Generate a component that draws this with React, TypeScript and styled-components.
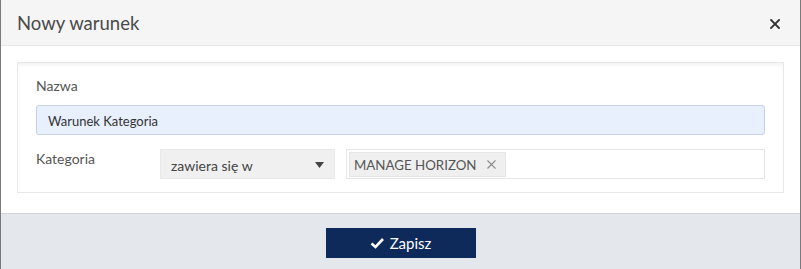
import React from "react";
import styled, { createGlobalStyle } from "styled-components";

const GlobalStyle = createGlobalStyle`
    body {
        margin: 0;
        font-family: "Lato", "Open Sans", sans-serif;
        background: #ffffff;
    }
`;

const Modal = styled.div`
    width: 801px;
    height: 269px;
    box-sizing: border-box;
    border-left: 1px solid #7a7a7a;
    border-right: 1px solid #7a7a7a;
    display: flex;
    flex-direction: column;
    background: #ffffff;
`;

const Header = styled.header`
    height: 45px;
    background: #f5f5f5;
    border-bottom: 1px solid #e6e6e6;
    display: flex;
    align-items: center;
    justify-content: space-between;
    padding: 0 20px 0 16px;

    h2 {
        margin: 0;
        font-weight: 400;
        font-size: 18.5px;
        color: #4a4a4a;
    }
`;

const CloseButton = styled.button`
    border: none;
    background: transparent;
    padding: 0;
    display: flex;
    margin-top: 2px;
    cursor: pointer;
`;

const Body = styled.div`
    padding: 16px 16px 20px;
`;

const Panel = styled.section`
    border: 1px solid #e8e8e8;
    box-shadow: inset 0 3px 4px -2px #ececec;
    padding: 12px 18px 13px;
    display: flex;
    flex-direction: column;
`;

const Label = styled.label`
    font-size: 14px;
    color: #555555;
    line-height: 18px;
`;

const NameLabel = styled(Label)`
    margin: 2px 0 10px;
`;

const TextInput = styled.div`
    height: 30px;
    box-sizing: border-box;
    border: 1px solid #c6d2e4;
    border-radius: 3px;
    background: #e8f0fe;
    font-size: 13px;
    color: #333333;
    padding: 1px 11px 0;
    display: flex;
    align-items: center;
`;

const Row = styled.div`
    display: grid;
    grid-template-columns: 113px 175px 1fr;
    column-gap: 11px;
    margin-top: 14px;
`;

const RowLabel = styled(Label)`
    padding-top: 1px;
`;

const Select = styled.div`
    height: 30px;
    box-sizing: border-box;
    background: #f0f0f0;
    border: 1px solid #e9e9e9;
    display: flex;
    align-items: center;
    justify-content: space-between;
    padding: 2px 10px 0 10px;
    font-size: 14px;
    color: #444444;
`;

const TagBox = styled.div`
    height: 30px;
    box-sizing: border-box;
    border: 1px solid #e5e5e5;
    padding: 2px;
    display: flex;
    align-items: center;
`;

const Tag = styled.span`
    height: 25px;
    box-sizing: border-box;
    background: #efefef;
    border: 1px solid #e6e6e6;
    display: inline-flex;
    align-items: center;
    gap: 10px;
    padding: 1px 9px 0 4px;
    font-size: 13.3px;
    color: #555555;
`;

const Footer = styled.footer`
    flex: 1;
    background: #e4e7eb;
    border-top: 1px solid #d0d3d7;
    display: flex;
    justify-content: center;
    padding-top: 14px;
`;

const SaveButton = styled.button`
    width: 150px;
    height: 30px;
    border: none;
    background: #0d2a5b;
    color: #ffffff;
    font-family: inherit;
    font-size: 15px;
    display: flex;
    align-items: center;
    justify-content: center;
    gap: 5px;
    cursor: pointer;
`;

const CloseIcon = ({ size, color, width }: { size: number; color: string; width: number }) => (
    <svg width={size} height={size} viewBox="0 0 10 10">
        <path d="M1 1 L9 9 M9 1 L1 9" stroke={color} strokeWidth={width} strokeLinecap="square" />
    </svg>
);

export default function App() {
    return (
        <>
            <GlobalStyle />
            <Modal>
                <Header>
                    <h2>Nowy warunek</h2>
                    <CloseButton aria-label="Zamknij">
                        <CloseIcon size={10} color="#333333" width={1.9} />
                    </CloseButton>
                </Header>
                <Body>
                    <Panel>
                        <NameLabel>Nazwa</NameLabel>
                        <TextInput>Warunek Kategoria</TextInput>
                        <Row>
                            <RowLabel>Kategoria</RowLabel>
                            <Select>
                                <span>zawiera się w</span>
                                <svg width="9" height="6" viewBox="0 0 9 6">
                                    <path d="M0 0 H9 L4.5 6 Z" fill="#444444" />
                                </svg>
                            </Select>
                            <TagBox>
                                <Tag>
                                    MANAGE HORIZON
                                    <CloseIcon size={9} color="#888888" width={1.3} />
                                </Tag>
                            </TagBox>
                        </Row>
                    </Panel>
                </Body>
                <Footer>
                    <SaveButton>
                        <svg width="15" height="12" viewBox="0 0 15 12">
                            <path d="M1.5 6.5 L5.5 10 L13 2" stroke="#ffffff" strokeWidth="2.6" fill="none" />
                        </svg>
                        Zapisz
                    </SaveButton>
                </Footer>
            </Modal>
        </>
    );
}
